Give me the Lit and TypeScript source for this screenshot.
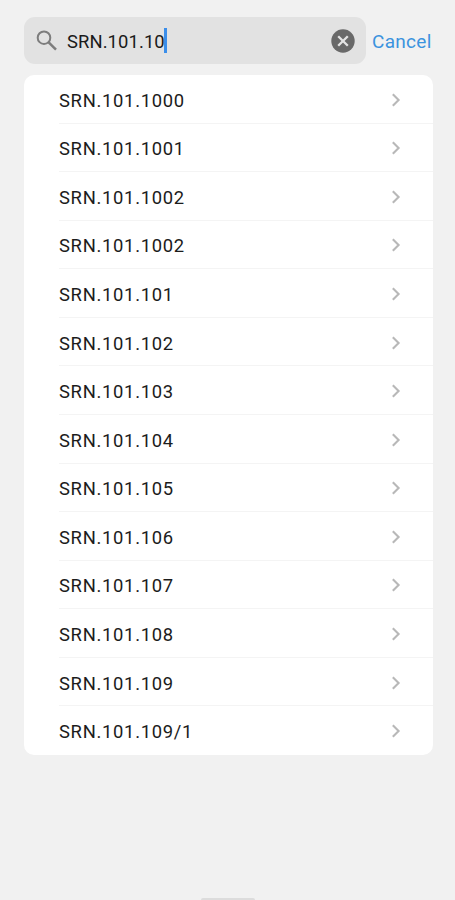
import { LitElement, html, css } from "lit";
import { customElement, property } from "lit/decorators.js";

@customElement("search-bar")
class SearchBar extends LitElement {
  @property() value = "";

  static styles = css`
    :host { display: flex; align-items: center; height: 47px; }
    .field {
      display: flex; align-items: center; box-sizing: border-box;
      width: 342px; height: 47px; padding: 0 11px 0 12px;
      background: #e2e2e2; border-radius: 11px;
    }
    svg { display: block; flex: none; }
    .query { margin-left: 9px; font-size: 18.4px; line-height: 24px; letter-spacing: 0.1px; color: #1a1a1a; padding-top: 2px; }
    .caret { width: 3px; height: 25px; margin-left: -1px; background: #3b8eea; }
    .clear { margin-left: auto; }
    .cancel { margin-left: 6px; padding-top: 2px; font-size: 19px; line-height: 24px; letter-spacing: 0.3px; color: #3b93de; }
  `;

  render() {
    return html`
      <div class="field">
        <svg width="22" height="22" viewBox="0 0 22 22" fill="none" stroke="#7d7d7d">
          <circle cx="8" cy="7.7" r="6.3" stroke-width="2" />
          <path d="M12.4 12.1 L20 19.7" stroke-width="2.5" />
        </svg>
        <span class="query">${this.value}</span>
        <span class="caret"></span>
        <svg class="clear" width="24" height="24" viewBox="0 0 24 24">
          <circle cx="12" cy="12" r="11.7" fill="#696969" />
          <path d="M7.2 7.2 L16.8 16.8 M16.8 7.2 L7.2 16.8" stroke="#e4e4e4" stroke-width="2.3" />
        </svg>
      </div>
      <span class="cancel">Cancel</span>
    `;
  }
}

@customElement("result-row")
class ResultRow extends LitElement {
  @property() label = "";

  static styles = css`
    :host { display: flex; align-items: stretch; padding-left: 35px; }
    .body {
      flex: 1; display: flex; align-items: center; justify-content: space-between;
      padding: 4px 32px 0 0; border-bottom: 1px solid #f4f4f4;
    }
    :host(:last-child) .body { border-bottom-color: transparent; }
    .label { font-size: 18.4px; line-height: 24px; letter-spacing: 0.7px; color: #1c1c1c; }
    svg { display: block; margin-top: -2px; }
  `;

  render() {
    return html`
      <div class="body">
        <span class="label">${this.label}</span>
        <svg width="10" height="14" viewBox="0 0 10 14" fill="none" stroke="#b8b8b8" stroke-width="2.1">
          <path d="M1.8 1.2 L7.6 7 L1.8 12.8" />
        </svg>
      </div>
    `;
  }
}

@customElement("app-root")
class AppRoot extends LitElement {
  private results = [
    "SRN.101.1000", "SRN.101.1001", "SRN.101.1002", "SRN.101.1002",
    "SRN.101.101", "SRN.101.102", "SRN.101.103", "SRN.101.104",
    "SRN.101.105", "SRN.101.106", "SRN.101.107", "SRN.101.108",
    "SRN.101.109", "SRN.101.109/1",
  ];

  static styles = css`
    :host {
      display: flex; flex-direction: column; box-sizing: border-box;
      height: 900px; padding: 17px 22px 0 24px; overflow: hidden;
      background: #f1f1f1; font-family: Roboto, sans-serif;
    }
    .results {
      display: grid; grid-template-rows: repeat(14, 1fr);
      height: 680px; margin-top: 11px; background: #fff; border-radius: 10px;
    }
    .home { width: 54px; height: 2px; margin: auto auto 0; background: #dcdcdc; transform: translateX(-1px); border-radius: 2px 2px 0 0; }
  `;

  render() {
    return html`
      <search-bar .value=${"SRN.101.10"}></search-bar>
      <div class="results">
        ${this.results.map((label) => html`<result-row .label=${label}></result-row>`)}
      </div>
      <div class="home"></div>
    `;
  }
}
